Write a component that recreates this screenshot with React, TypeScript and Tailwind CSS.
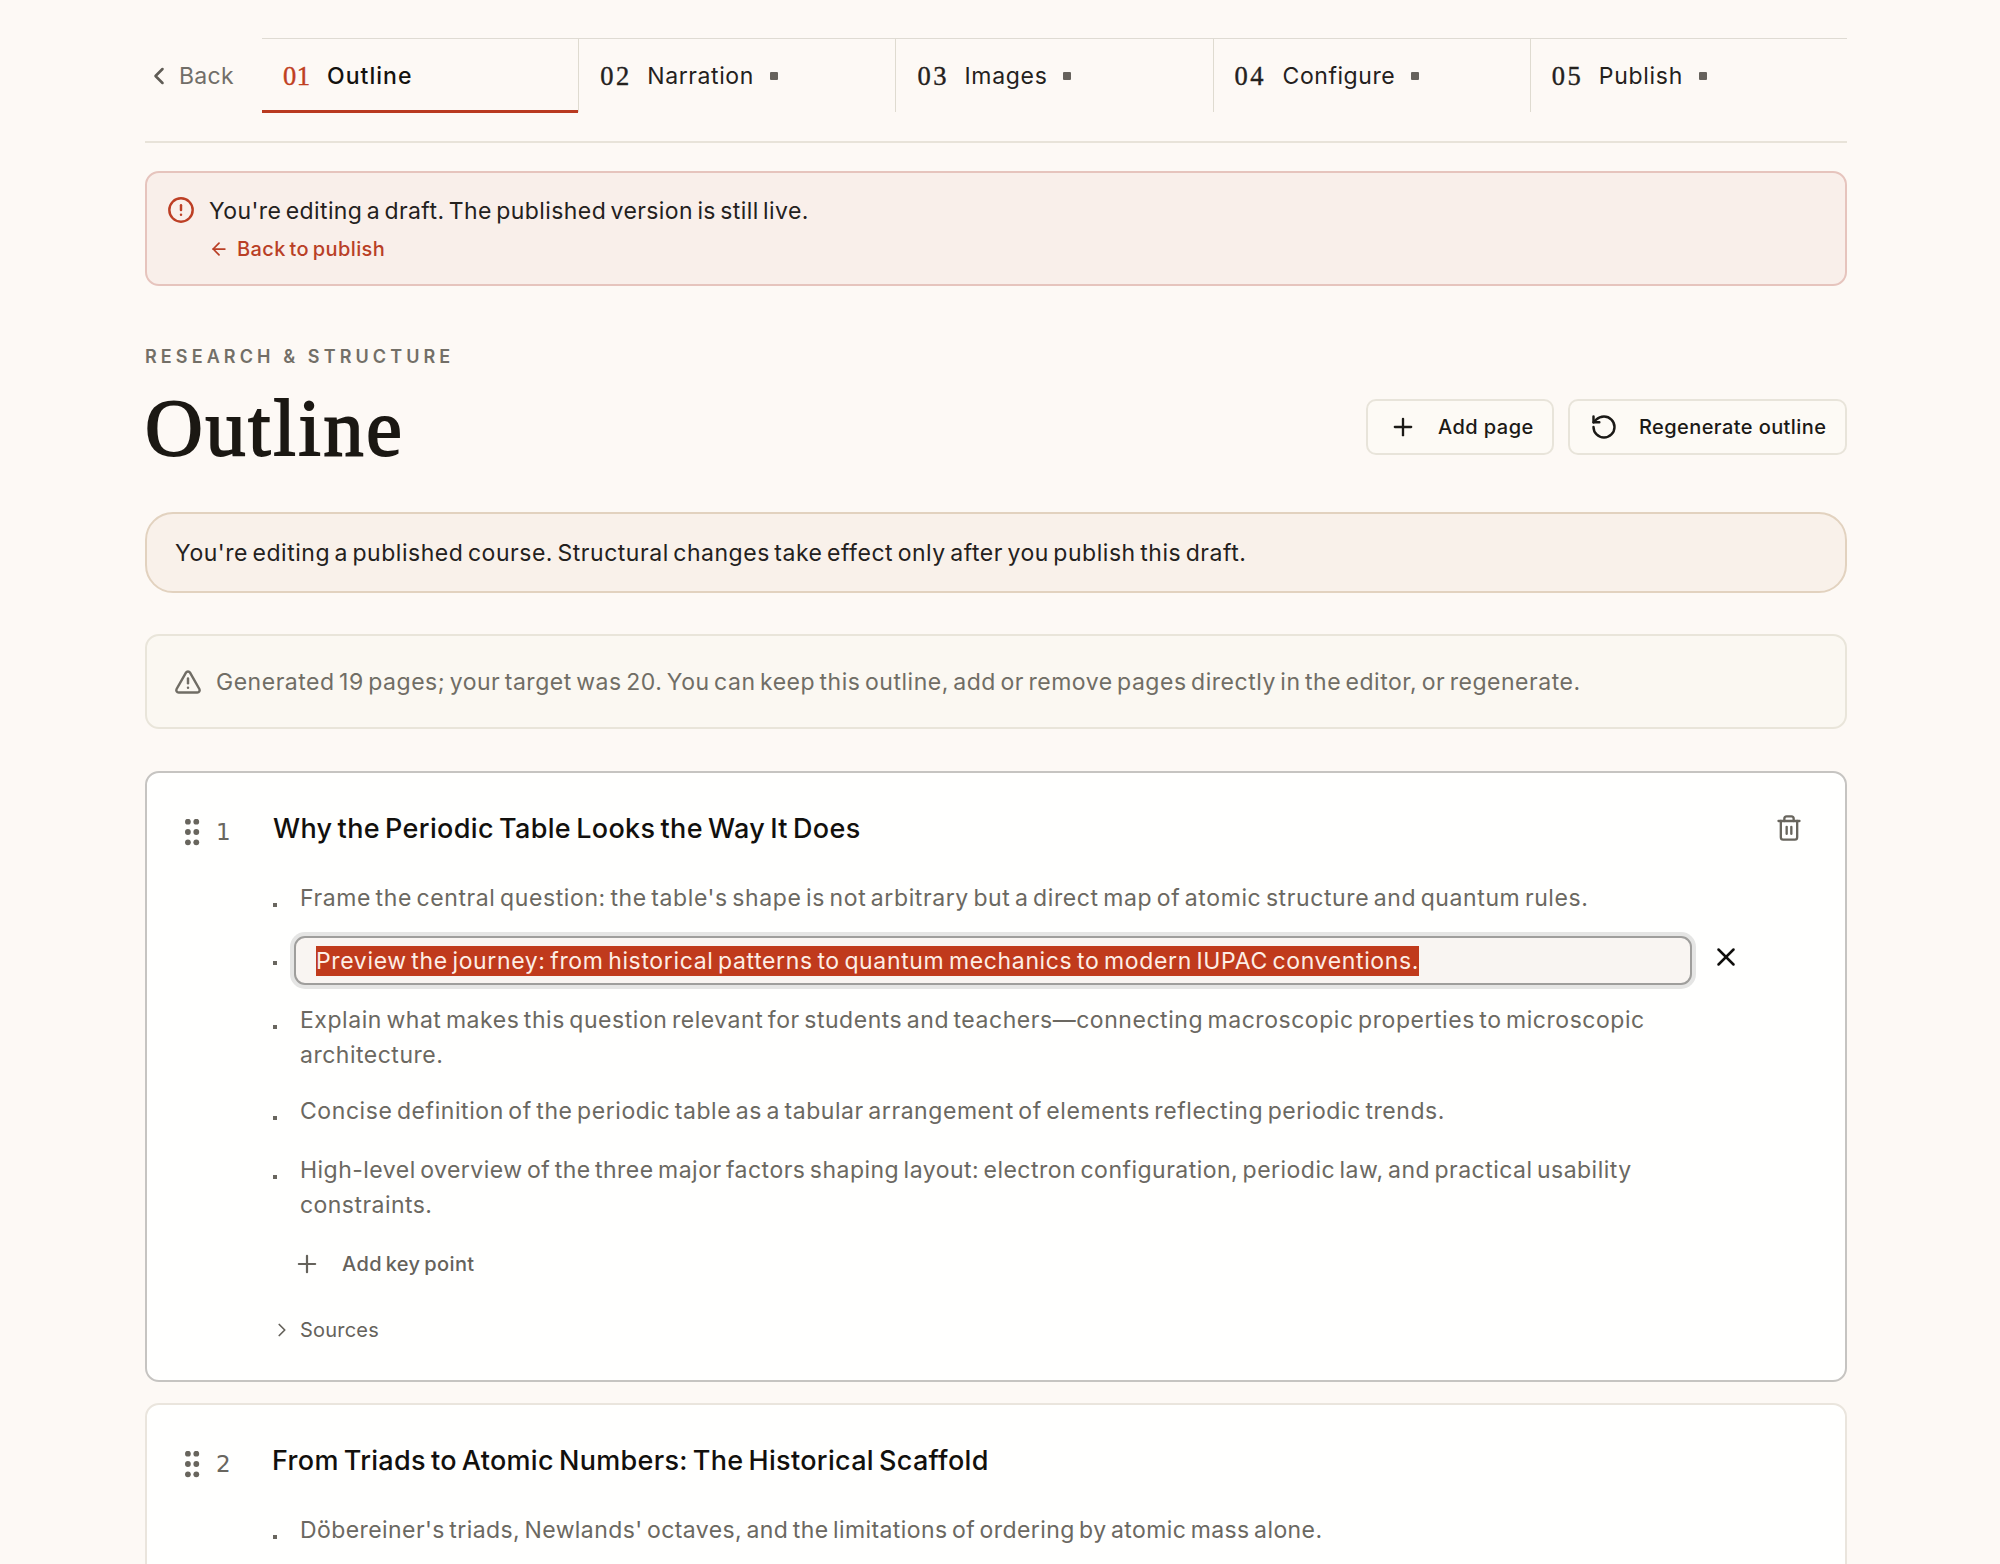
import type { ReactNode } from "react";
import {
  ArrowLeft,
  ChevronLeft,
  ChevronRight,
  CircleAlert,
  Plus,
  RotateCcw,
  Trash2,
  TriangleAlert,
  X,
} from "lucide-react";

type Step = { num: string; label: string; numClass: string; labelClass: string; dotClass?: string; active?: boolean };

const steps: Step[] = [
  { num: "01", label: "Outline", numClass: "w-[28px] tracking-[0.5px]", labelClass: "tracking-[1.04px]", active: true },
  { num: "02", label: "Narration", numClass: "w-[31px] tracking-[2.5px]", labelClass: "tracking-[0.6px]", dotClass: "ml-[16px]" },
  { num: "03", label: "Images", numClass: "w-[31px] tracking-[2.5px]", labelClass: "tracking-[0.7px]", dotClass: "ml-[15px]" },
  { num: "04", label: "Configure", numClass: "w-[32px] tracking-[2.5px]", labelClass: "tracking-[0.55px]", dotClass: "ml-[16px]" },
  { num: "05", label: "Publish", numClass: "w-[31px] tracking-[2.5px]", labelClass: "tracking-[0.7px]", dotClass: "ml-[16px]" },
];

function StepTab({ step }: { step: Step }) {
  return (
    <div
      className={
        step.active
          ? "flex flex-1 items-center pl-[21px] shadow-[inset_0_-3px_0_#b93a20]"
          : "mb-px flex flex-1 items-center border-l border-[#dfdbd0] pl-[21px]"
      }
    >
      <span
        className={`font-['Liberation_Serif',serif] text-[26.5px] leading-[36px] ${step.numClass} ${
          step.active ? "text-[#c0401f] [-webkit-text-stroke:0.4px_#c0401f]" : "[-webkit-text-stroke:0.4px_#24211d]"
        }`}
      >
        {step.num}
      </span>
      <span className={`ml-4 leading-[36px] ${step.labelClass} ${step.active ? "font-medium text-[#14120f]" : ""}`}>
        {step.label}
      </span>
      {!step.active && <span className={`size-[8px] rounded-[1px] bg-[#66625c] ${step.dotClass}`} />}
    </div>
  );
}

function Grip() {
  return (
    <svg width="15" height="27" viewBox="0 0 15 27" fill="#68655d">
      {[2.7, 13, 23.3].map((y) => (
        <g key={y}>
          <circle cx="2.9" cy={y} r="2.9" />
          <circle cx="11.3" cy={y} r="2.9" />
        </g>
      ))}
    </svg>
  );
}

function Bullet({ className }: { className: string }) {
  return <span className={`size-[4px] shrink-0 bg-[#69665f] ${className}`} />;
}

function Point({ className, children }: { className: string; children: ReactNode }) {
  return (
    <li className={`flex items-start ${className}`}>
      <Bullet className="mt-[22px]" />
      <div className="ml-[23px] leading-[35px] whitespace-nowrap text-[#6b6861] [word-spacing:-2.5px]">{children}</div>
    </li>
  );
}

function PageCard({
  index,
  title,
  titleClass,
  className,
  removable = false,
  children,
}: {
  index: number;
  title: string;
  titleClass: string;
  className: string;
  removable?: boolean;
  children: ReactNode;
}) {
  return (
    <article className={`flex rounded-[14px] border-2 bg-[#fffffe] pt-[37px] pl-[38px] ${className}`}>
      <div className="mt-[4px] flex h-[36px] w-[88px] shrink-0 items-center">
        <Grip />
        <span className="ml-[16px] font-['DejaVu_Sans',sans-serif] text-[23px] leading-[36px] text-[#69665f]">{index}</span>
      </div>
      <div className="flex-1">
        <div className="flex h-[36px] items-center justify-between pr-[42px]">
          <h2
            className={`pt-px text-[27px] leading-[36px] font-medium whitespace-nowrap text-[#12100d] [word-spacing:-2.5px] ${titleClass}`}
          >
            {title}
          </h2>
          {removable && <Trash2 size={28} strokeWidth={2} className="text-[#68655d]" />}
        </div>
        {children}
      </div>
    </article>
  );
}

export default function App() {
  return (
    <div className="h-[1564px] w-[2000px] overflow-hidden bg-[#fdf9f5] pl-[145px] font-[Inter,sans-serif] text-[23px] text-[#24211d]">
      <div className="w-[1702px]">
        <header className="flex h-[143px] border-b-2 border-[#e8e3d9] pt-[38px]">
          <div className="flex h-[75px] w-[117px] items-center text-[#716e68]">
            <ChevronLeft size={28} strokeWidth={2.2} className="text-[#5f5c55]" />
            <span className="ml-[6px] pt-px leading-[36px] tracking-[0.3px]">Back</span>
          </div>
          <nav className="flex h-[75px] flex-1 border-t border-[#dfdbd3]">
            {steps.map((s) => (
              <StepTab key={s.num} step={s} />
            ))}
          </nav>
        </header>

        <section className="mt-[28px] flex h-[115px] items-start rounded-[14px] border-2 border-[#e6c4bd] bg-[#f9efea] pt-[20px] pl-[20px]">
          <CircleAlert size={28} strokeWidth={2.1} className="mt-[3px] text-[#bd3f25]" />
          <div className="ml-[14px] pt-px">
            <p className="leading-[35px] tracking-[0.41px] [word-spacing:-2.5px]">
              You're editing a draft. The published version is still live.
            </p>
            <a className="mt-[6px] flex items-center text-[20px] leading-[28px] font-medium text-[#b93f26]">
              <ArrowLeft size={20} strokeWidth={2.1} />
              <span className="ml-[8px] tracking-[0.4px] [word-spacing:-2px]">Back to publish</span>
            </a>
          </div>
        </section>

        <p className="mt-[59px] text-[18px] leading-[24px] font-semibold tracking-[4.1px] text-[#736f67]">
          RESEARCH &amp; STRUCTURE
        </p>
        <div className="mt-[18px] flex h-[80px] items-center justify-between">
          <h1 className="pt-[2px] font-['Liberation_Serif',serif] text-[80px] leading-[80px] tracking-[2.8px] text-[#1b1813] [-webkit-text-stroke:1.9px_#1b1813]">
            Outline
          </h1>
          <div className="flex gap-[14px] text-[20px] font-medium text-[#1b1916] [word-spacing:-2px]">
            <button className="flex h-[56px] w-[188px] items-center rounded-[10px] border-2 border-[#e8e4da] bg-[#fdfaf5] pl-[21px] whitespace-nowrap">
              <Plus size={28} strokeWidth={2} />
              <span className="ml-[21px] tracking-[0.44px]">Add page</span>
            </button>
            <button className="flex h-[56px] w-[279px] items-center rounded-[10px] border-2 border-[#e8e4da] bg-[#fdfaf5] pl-[20px] whitespace-nowrap">
              <RotateCcw size={28} strokeWidth={2.1} />
              <span className="ml-[21px] tracking-[0.42px]">Regenerate outline</span>
            </button>
          </div>
        </div>

        <section className="mt-[45px] flex h-[81px] items-center rounded-[28px] border-2 border-[#e2d2bf] bg-[#f9f1ea] pl-[28px] whitespace-nowrap">
          <p className="pt-[2px] tracking-[0.53px] [word-spacing:-2.5px]">
            You're editing a published course. Structural changes take effect only after you publish this draft.
          </p>
        </section>

        <section className="mt-[41px] flex h-[95px] items-center rounded-[14px] border-2 border-[#e9e5da] bg-[#fbf8f2] pl-[27px] whitespace-nowrap text-[#706d65]">
          <TriangleAlert size={28} strokeWidth={2.1} />
          <p className="ml-[14px] pt-[2px] tracking-[0.52px] [word-spacing:-2.5px]">
            Generated 19 pages; your target was 20. You can keep this outline, add or remove pages directly in the
            editor, or regenerate.
          </p>
        </section>

        <PageCard
          index={1}
          title="Why the Periodic Table Looks the Way It Does"
          titleClass="tracking-[0.36px]"
          className="mt-[42px] h-[611px] border-[#c6c4c1]"
          removable
        >
          <ul>
            <Point className="mt-[35px]">
              <span className="tracking-[0.6px]">
                Frame the central question: the table's shape is not arbitrary but a direct map of atomic structure and
                quantum rules.
              </span>
            </Point>
            <li className="mt-[20px] flex h-[49px] items-start">
              <Bullet className="mt-[25px]" />
              <div className="ml-[17px] flex h-[49px] w-[1398px] items-center rounded-[11px] border-2 border-[#9f9e9c] bg-[#f9f5f2] pl-[20px] shadow-[0_0_0_4px_#e5e5e4]">
                <span className="bg-[#c03a1c] leading-[30px] tracking-[0.642px] whitespace-nowrap text-[#fdeee6] [word-spacing:-2.5px]">
                  Preview the journey: from historical patterns to quantum mechanics to modern IUPAC conventions.
                </span>
              </div>
              <X size={30} strokeWidth={2} className="mt-[6px] ml-[19px] text-[#0f0e0c]" />
            </li>
            <Point className="mt-[18px]">
              <p className="tracking-[0.54px]">
                Explain what makes this question relevant for students and teachers—connecting macroscopic properties to
                microscopic
              </p>
              <p className="tracking-[0.5px]">architecture.</p>
            </Point>
            <Point className="mt-[21px]">
              <span className="tracking-[0.565px]">
                Concise definition of the periodic table as a tabular arrangement of elements reflecting periodic
                trends.
              </span>
            </Point>
            <Point className="mt-[24px]">
              <p className="tracking-[0.475px]">
                High-level overview of the three major factors shaping layout: electron configuration, periodic law, and
                practical usability
              </p>
              <p className="tracking-[0.45px]">constraints.</p>
            </Point>
          </ul>
          <button className="mt-[27px] ml-[20px] flex h-[28px] items-center text-[20px] leading-[28px] font-medium text-[#65625b]">
            <Plus size={28} strokeWidth={1.9} />
            <span className="ml-[21px] tracking-[0.4px] [word-spacing:-2px]">Add key point</span>
          </button>
          <button className="mt-[38px] -ml-[2px] flex h-[28px] items-center text-[20px] leading-[28px] text-[#65625b]">
            <ChevronRight size={22} strokeWidth={1.9} />
            <span className="ml-[7px] tracking-[0.2px]">Sources</span>
          </button>
        </PageCard>

        <PageCard
          index={2}
          title="From Triads to Atomic Numbers: The Historical Scaffold"
          titleClass="-ml-px tracking-[0.32px]"
          className="mt-[21px] h-[600px] border-[#eae5dd]"
        >
          <ul>
            <Point className="mt-[35px]">
              <span className="tracking-[0.42px]">
                Döbereiner's triads, Newlands' octaves, and the limitations of ordering by atomic mass alone.
              </span>
            </Point>
          </ul>
        </PageCard>
      </div>
    </div>
  );
}
